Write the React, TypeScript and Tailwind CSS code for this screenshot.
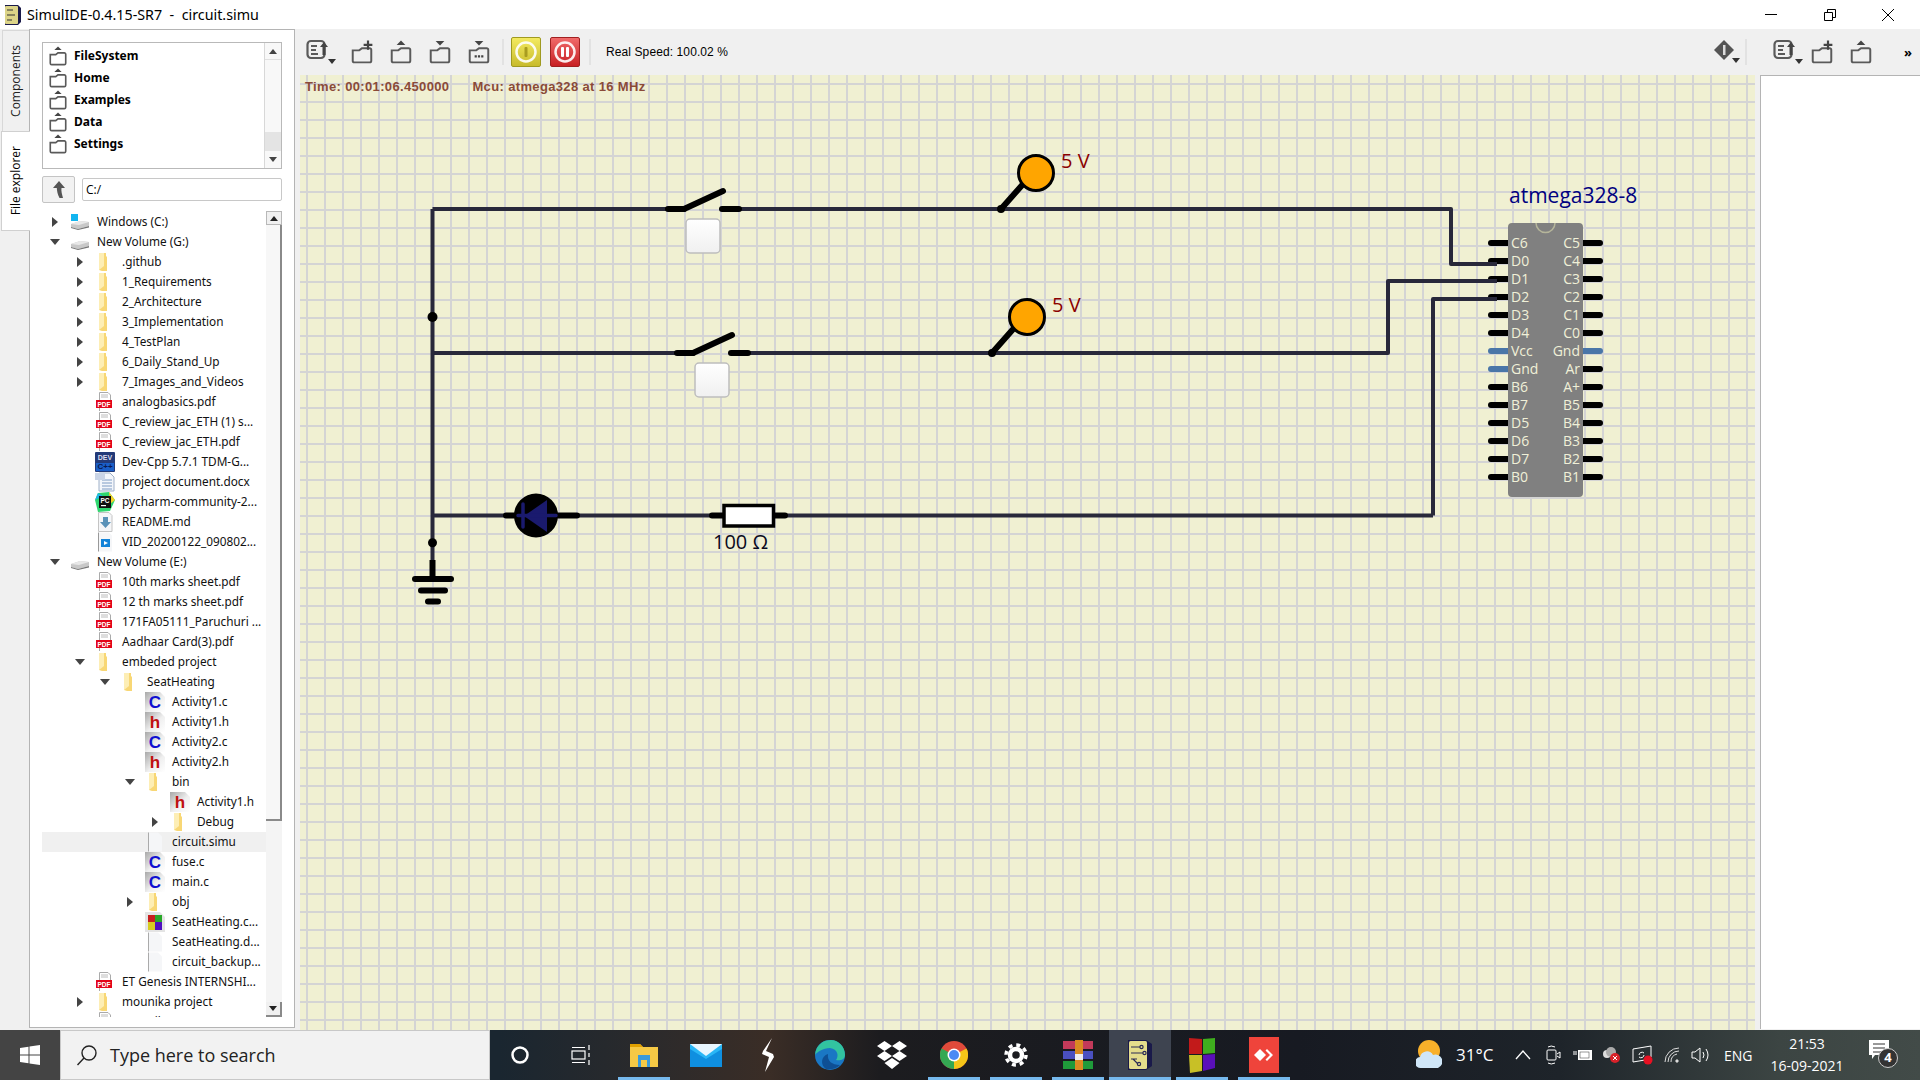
import React from 'react';

type Kind = 'win' | 'drive' | 'folder' | 'pdf' | 'dev' | 'docx' | 'py' | 'md' | 'vid' | 'c' | 'h' | 'blank' | 'rar';
type Arrow = 'right' | 'down' | null;

interface TreeRow {
  label: string;
  level: number;
  kind: Kind;
  arrow?: Arrow;
  selected?: boolean;
}

const treeRows: TreeRow[] = [
  { label: 'Windows (C:)', level: 0, kind: 'win', arrow: 'right' },
  { label: 'New Volume (G:)', level: 0, kind: 'drive', arrow: 'down' },
  { label: '.github', level: 1, kind: 'folder', arrow: 'right' },
  { label: '1_Requirements', level: 1, kind: 'folder', arrow: 'right' },
  { label: '2_Architecture', level: 1, kind: 'folder', arrow: 'right' },
  { label: '3_Implementation', level: 1, kind: 'folder', arrow: 'right' },
  { label: '4_TestPlan', level: 1, kind: 'folder', arrow: 'right' },
  { label: '6_Daily_Stand_Up', level: 1, kind: 'folder', arrow: 'right' },
  { label: '7_Images_and_Videos', level: 1, kind: 'folder', arrow: 'right' },
  { label: 'analogbasics.pdf', level: 1, kind: 'pdf' },
  { label: 'C_review_jac_ETH (1) s...', level: 1, kind: 'pdf' },
  { label: 'C_review_jac_ETH.pdf', level: 1, kind: 'pdf' },
  { label: 'Dev-Cpp 5.7.1 TDM-G...', level: 1, kind: 'dev' },
  { label: 'project document.docx', level: 1, kind: 'docx' },
  { label: 'pycharm-community-2...', level: 1, kind: 'py' },
  { label: 'README.md', level: 1, kind: 'md' },
  { label: 'VID_20200122_090802...', level: 1, kind: 'vid' },
  { label: 'New Volume (E:)', level: 0, kind: 'drive', arrow: 'down' },
  { label: '10th marks sheet.pdf', level: 1, kind: 'pdf' },
  { label: '12 th marks sheet.pdf', level: 1, kind: 'pdf' },
  { label: '171FA05111_Paruchuri ...', level: 1, kind: 'pdf' },
  { label: 'Aadhaar Card(3).pdf', level: 1, kind: 'pdf' },
  { label: 'embeded project', level: 1, kind: 'folder', arrow: 'down' },
  { label: 'SeatHeating', level: 2, kind: 'folder', arrow: 'down' },
  { label: 'Activity1.c', level: 3, kind: 'c' },
  { label: 'Activity1.h', level: 3, kind: 'h' },
  { label: 'Activity2.c', level: 3, kind: 'c' },
  { label: 'Activity2.h', level: 3, kind: 'h' },
  { label: 'bin', level: 3, kind: 'folder', arrow: 'down' },
  { label: 'Activity1.h', level: 4, kind: 'h' },
  { label: 'Debug', level: 4, kind: 'folder', arrow: 'right' },
  { label: 'circuit.simu', level: 3, kind: 'blank', selected: true },
  { label: 'fuse.c', level: 3, kind: 'c' },
  { label: 'main.c', level: 3, kind: 'c' },
  { label: 'obj', level: 3, kind: 'folder', arrow: 'right' },
  { label: 'SeatHeating.c...', level: 3, kind: 'rar' },
  { label: 'SeatHeating.d...', level: 3, kind: 'blank' },
  { label: 'circuit_backup...', level: 3, kind: 'blank' },
  { label: 'ET Genesis INTERNSHI...', level: 1, kind: 'pdf' },
  { label: 'mounika project', level: 1, kind: 'folder', arrow: 'right' },
  { label: 'mounika report', level: 1, kind: 'pdf' },
];

const indentClass = ['pl-0', 'pl-[25px]', 'pl-[50px]', 'pl-[75px]', 'pl-[100px]'];

const TreeArrow: React.FC<{ dir?: Arrow }> = ({ dir }) => (
  <span className="w-[26px] shrink-0 flex justify-center">
    {dir === 'right' && (
      <svg width="6" height="10"><path d="M0 0 L6 5 L0 10 Z" fill="#444" /></svg>
    )}
    {dir === 'down' && (
      <svg width="10" height="6"><path d="M0 0 L10 0 L5 6 Z" fill="#444" /></svg>
    )}
  </span>
);

const FileIcon: React.FC<{ kind: Kind }> = ({ kind }) => {
  if (kind === 'folder') {
    return (
      <svg width="20" height="20">
        <path d="M4 1 h7 v3 l1 1 v14 H7 l-3 -1 Z" fill="#f8d775" />
        <path d="M4 1 h5 v13 l-5 4 Z" fill="#fdeeb5" />
      </svg>
    );
  }
  if (kind === 'drive' || kind === 'win') {
    return (
      <svg width="20" height="20">
        <path d="M1 12 L10 9 L19 10 L19 14 L8 17 L1 15 Z" fill="#c8c8c8" />
        <path d="M1 12 L10 9 L19 10 L9 13 Z" fill="#e8e8e8" />
        <path d="M1 15 L8 17 L19 14 L19 15.5 L8 18 L1 16 Z" fill="#777" />
        {kind === 'win' && <rect x="1" y="2" width="7" height="7" fill="#12b5f0" />}
      </svg>
    );
  }
  if (kind === 'pdf') {
    return (
      <svg width="20" height="20">
        <path d="M4.5 0.5 H13 L15.5 3 V8 M4.5 0.5 V19" stroke="#aaa" fill="none" />
        <path d="M6 3 H13 M6 5 H13" stroke="#bbb" />
        <rect x="1" y="8" width="16" height="8" fill="#e3051a" />
        <text x="9" y="14.5" textAnchor="middle" fontSize="6.5" fontWeight="700" fill="#fff" fontFamily="Liberation Sans, sans-serif">PDF</text>
      </svg>
    );
  }
  if (kind === 'c' || kind === 'h') {
    return (
      <svg width="20" height="20">
        <defs>
          <linearGradient id="srcBg" x1="0" y1="0" x2="1" y2="1">
            <stop offset="0" stopColor="#a8a8a8" />
            <stop offset="0.55" stopColor="#efefef" />
            <stop offset="1" stopColor="#fff" />
          </linearGradient>
        </defs>
        <path d="M0 0 H15 L20 5 V20 H0 Z" fill="url(#srcBg)" />
        <text x="10" y="16" textAnchor="middle" fontSize="17" fontWeight="700" fill={kind === 'c' ? '#1010d0' : '#c01010'} fontFamily="Liberation Sans, sans-serif">{kind === 'c' ? 'C' : 'h'}</text>
      </svg>
    );
  }
  if (kind === 'blank') {
    return (
      <svg width="20" height="20">
        <path d="M3.5 0.5 H13 L17 4.5 V19.5 H3.5 Z" fill="#f5f6f8" />
        <path d="M3.5 0.5 V19.5" stroke="#aaa" fill="none" />
      </svg>
    );
  }
  if (kind === 'rar') {
    return (
      <svg width="20" height="20">
        <path d="M0 0 H15 L20 5 V20 H0 Z" fill="#e4e4e4" />
        <rect x="3" y="3" width="7" height="7" fill="#c81e1e" />
        <rect x="10" y="3" width="7" height="7" fill="#28a828" />
        <rect x="3" y="10" width="7" height="8" fill="#d8cc20" />
        <rect x="10" y="10" width="7" height="8" fill="#5010c0" />
      </svg>
    );
  }
  if (kind === 'dev') {
    return (
      <svg width="20" height="20">
        <rect x="0" y="0" width="20" height="20" rx="1" fill="#233a78" />
        <rect x="1" y="11" width="18" height="8" fill="#1a5fc8" />
        <text x="10" y="8" textAnchor="middle" fontSize="7" fontWeight="700" fill="#dde" fontFamily="Liberation Sans, sans-serif">DEV</text>
        <text x="10" y="17" textAnchor="middle" fontSize="8" fontWeight="700" fill="#0a1a50" fontFamily="Liberation Sans, sans-serif">C++</text>
      </svg>
    );
  }
  if (kind === 'docx') {
    return (
      <svg width="20" height="20">
        <path d="M4 1 H15 L19 5 V19 H4 Z" fill="#f3f6fb" stroke="#9fb0c8" />
        <path d="M7 8 H17 M7 11 H17 M7 14 H17 M7 17 H17" stroke="#7f9cc4" />
        <rect x="0" y="1" width="10" height="7" fill="#c9d4e6" />
      </svg>
    );
  }
  if (kind === 'py') {
    return (
      <svg width="20" height="20">
        <path d="M3 1 L14 0 L20 8 L15 19 L3 20 L0 8 Z" fill="#2fd66e" />
        <path d="M14 0 L20 8 L15 12 Z" fill="#f5d327" />
        <path d="M0 8 L3 1 L8 4 Z" fill="#22b8e8" />
        <rect x="4" y="4" width="12" height="12" fill="#111" />
        <text x="10" y="11" textAnchor="middle" fontSize="6.5" fontWeight="700" fill="#fff" fontFamily="Liberation Sans, sans-serif">PC</text>
        <rect x="6" y="13" width="5" height="1.2" fill="#fff" />
      </svg>
    );
  }
  if (kind === 'md') {
    return (
      <svg width="20" height="20">
        <path d="M3.5 0.5 H14 L17 3.5 V19.5 H3.5 Z" fill="#f5f6f8" stroke="#c4c4c4" />
        <path d="M8 5 H13 V10 H16 L10.5 16 L5 10 H8 Z" fill="#5a92b8" />
      </svg>
    );
  }
  return (
    <svg width="20" height="20">
      <path d="M3.5 0.5 H14 L17 3.5 V19.5 H3.5 Z" fill="#f5f6f8" />
      <path d="M3.5 0.5 V19.5" stroke="#999" />
      <rect x="6" y="7" width="9" height="8" fill="#1383d8" />
      <path d="M9 9 L13 11 L9 13 Z" fill="#fff" />
    </svg>
  );
};

const FolderUp: React.FC<{ mark?: 'up' | 'down' | 'dots' | 'plus' | 'none'; size?: number }> = ({ mark = 'up', size = 22 }) => (
  <svg width={size} height={size} viewBox="0 0 22 22" fill="none">
    <path d="M2.5 9.5 V19 a1.5 1.5 0 0 0 1.5 1.5 H18 a1.5 1.5 0 0 0 1.5 -1.5 V9 a1.5 1.5 0 0 0 -1.5 -1.5 H11 L8.5 9.5 Z" stroke="#5a5a5a" strokeWidth="1.8" />
    {mark === 'up' && <path d="M7 4.5 L11 0.5 L15 4.5 Z" fill="#444" />}
    {mark === 'down' && <path d="M7 1 L15 1 L11 5 Z" fill="#444" />}
    {mark === 'dots' && (
      <g>
        <path d="M7 1 L15 1 L11 5 Z" fill="#444" />
        <path d="M7 15 H15" stroke="#444" strokeWidth="2" strokeDasharray="2 1" />
      </g>
    )}
    {mark === 'plus' && <path d="M16.5 0.5 V9 M12.5 4.5 H20.5" stroke="#444" strokeWidth="2" />}
  </svg>
);

const SaveIcon: React.FC = () => (
  <span className="relative w-[30px] h-[30px] flex items-start">
    <svg width="26" height="24" viewBox="0 0 26 24" fill="none" className="mt-[2px]">
      <rect x="1.5" y="2" width="17" height="17" rx="3.5" stroke="#5a5a5a" strokeWidth="2.2" />
      <path d="M5 7 H11 M5 11 H10 M5 15 H12" stroke="#5a5a5a" strokeWidth="2" />
      <path d="M14 8 L18 3 L22 8 H19.5 V16 H16.5 V8 Z" fill="#444" />
    </svg>
    <svg width="8" height="5" className="absolute right-0 bottom-[3px]"><path d="M0 0 H8 L4 5 Z" fill="#333" /></svg>
  </span>
);

const PowerButton: React.FC<{ tone: 'yellow' | 'red' }> = ({ tone }) => (
  <span className={tone === 'yellow'
    ? 'w-[30px] h-[30px] rounded-[2px] flex items-center justify-center border border-[#a09a20] bg-[linear-gradient(#f3ea60,#c8bb2c)]'
    : 'w-[30px] h-[30px] rounded-[2px] flex items-center justify-center border border-[#a02020] bg-[linear-gradient(#f06a6a,#c82024)]'}>
    <svg width="24" height="24" viewBox="0 0 24 24" fill="none">
      <circle cx="12" cy="12" r="9.5" stroke="#fff" strokeWidth="2.5" opacity="0.9" />
      {tone === 'yellow' ? (
        <rect x="10.5" y="7" width="3" height="10" rx="1" fill="#a89c20" />
      ) : (
        <g fill="#fff">
          <rect x="8" y="7" width="3" height="10" rx="1" />
          <rect x="13" y="7" width="3" height="10" rx="1" />
        </g>
      )}
    </svg>
  </span>
);

const Separator: React.FC = () => <span className="block w-[2px] h-[26px] bg-[#e2e2e2]" />;

const leftPins = ['C6', 'D0', 'D1', 'D2', 'D3', 'D4', 'Vcc', 'Gnd', 'B6', 'B7', 'D5', 'D6', 'D7', 'B0'];
const rightPins = ['C5', 'C4', 'C3', 'C2', 'C1', 'C0', 'Gnd', 'Ar', 'A+', 'B5', 'B4', 'B3', 'B2', 'B1'];

const pinY = (i: number) => 243 + i * 18;

const Wire: React.FC<{ d: string }> = ({ d }) => (
  <path d={d} stroke="#28283a" strokeWidth="4" fill="none" strokeLinejoin="round" />
);

const Pin: React.FC<{ x1: number; y1: number; x2: number; y2: number; color?: string; w?: number }> = ({ x1, y1, x2, y2, color = '#000', w = 6 }) => (
  <line x1={x1} y1={y1} x2={x2} y2={y2} stroke={color} strokeWidth={w} strokeLinecap="round" />
);

const Switch: React.FC<{ x: number; y: number }> = ({ x, y }) => (
  <g>
    <Pin x1={x} y1={y} x2={x + 16} y2={y} />
    <Pin x1={x + 16} y1={y} x2={x + 55} y2={y - 18} />
    <Pin x1={x + 54} y1={y} x2={x + 71} y2={y} />
    <rect x={x + 18} y={y + 10} width={34} height={34} rx={4} fill="url(#btnGrad)" stroke="#bdbdbd" strokeWidth="1.5" />
  </g>
);

const Probe: React.FC<{ cx: number; cy: number }> = ({ cx, cy }) => (
  <g>
    <Pin x1={cx - 35} y1={cy + 36} x2={cx - 12} y2={cy + 10} />
    <circle cx={cx - 35} cy={cy + 36} r={4} fill="#000" />
    <circle cx={cx} cy={cy} r={17.5} fill="#ffa500" stroke="#000" strokeWidth="3" />
    <text x={cx + 25} y={cy - 5} fontSize="20" fill="#8b0000" fontFamily="'Open Sans', sans-serif">5 V</text>
  </g>
);

const Circuit: React.FC = () => (
  <svg width="1455" height="955" className="absolute left-0 top-0" fontFamily="'Open Sans', sans-serif">
    <defs>
      <linearGradient id="btnGrad" x1="0" y1="0" x2="0" y2="1">
        <stop offset="0" stopColor="#fff" />
        <stop offset="1" stopColor="#f0f0f0" />
      </linearGradient>
    </defs>
    <g transform="translate(-300 -75)">
      <Wire d="M432.5 209 V560" />
      <Wire d="M432.5 209 H670" />
      <Wire d="M735 209 H1451 V264 H1497" />
      <Wire d="M432.5 353 H680" />
      <Wire d="M745 353 H1388 V281 H1497" />
      <Wire d="M1433 515.5 V299 H1497" />
      <Wire d="M432.5 515.5 H1433" />

      <Switch x={668} y={209} />
      <Switch x={677} y={353} />
      <Probe cx={1036} cy={173} />
      <Probe cx={1027} cy={317} />

      <circle cx="432.5" cy="317" r="5" fill="#000" />
      <circle cx="432.5" cy="542.7" r="4.5" fill="#000" />

      <Pin x1={506} y1={515.5} x2={515} y2={515.5} />
      <Pin x1={556} y1={515.5} x2={577} y2={515.5} />
      <circle cx="536" cy="515.5" r="22" fill="#000" />
      <path d="M547 500 V532 L524 516 Z" fill="#1a1a6e" />
      <path d="M523 504 V527 M518 515.5 H556" stroke="#1a1a6e" strokeWidth="3.5" strokeLinecap="round" />

      <Pin x1={712} y1={515.5} x2={724} y2={515.5} />
      <Pin x1={774} y1={515.5} x2={785} y2={515.5} />
      <rect x="724" y="505.5" width="49.5" height="20.5" fill="#fff" stroke="#000" strokeWidth="3.5" />
      <text x="713" y="549" fontSize="20" fill="#0a0a20">100 Ω</text>

      <line x1="432.5" y1="560" x2="432.5" y2="579" stroke="#000" strokeWidth="6" />
      <Pin x1={415} y1={579} x2={451} y2={579} />
      <Pin x1={421} y1={590.5} x2={445} y2={590.5} />
      <Pin x1={428} y1={601.5} x2={438} y2={601.5} />

      <text x="1509" y="203" fontSize="21" fill="#000080">atmega328-8</text>

      {leftPins.map((name, i) => (
        <g key={`l${i}`}>
          <Pin x1={1491} y1={pinY(i)} x2={1508} y2={pinY(i)} color={name === 'Vcc' || name === 'Gnd' ? '#4a76a8' : '#000'} />
        </g>
      ))}
      {rightPins.map((name, i) => (
        <g key={`r${i}`}>
          <Pin x1={1583} y1={pinY(i)} x2={1600} y2={pinY(i)} color={name === 'Gnd' ? '#4a76a8' : '#000'} />
        </g>
      ))}
      <Wire d="M1480 264 H1497" />
      <Wire d="M1480 281 H1497" />
      <Wire d="M1480 299 H1497" />
      <rect x="1508" y="223" width="75" height="274" rx="4" fill="#808080" />
      <path d="M1536 223 a9.5 9.5 0 0 0 19 0" fill="none" stroke="#b5b59a" strokeWidth="1.5" />
      {leftPins.map((name, i) => (
        <text key={`lt${i}`} x="1511" y={pinY(i) + 5} fontSize="14" fill="#f0f0d8">{name}</text>
      ))}
      {rightPins.map((name, i) => (
        <text key={`rt${i}`} x="1580" y={pinY(i) + 5} fontSize="14" fill="#f0f0d8" textAnchor="end">{name}</text>
      ))}
    </g>
  </svg>
);

const TaskIcon: React.FC<{ active?: boolean; under?: boolean; children: React.ReactNode }> = ({ active, under, children }) => (
  <span className={active
    ? 'relative w-[62px] h-full shrink-0 flex items-center justify-center bg-[#3e4450]'
    : 'relative w-[62px] h-full shrink-0 flex items-center justify-center'}>
    {children}
    {under && <span className={active ? 'absolute bottom-0 inset-x-0 h-[3px] bg-[#76b9ed]' : 'absolute bottom-0 inset-x-[5px] h-[3px] bg-[#76b9ed]'} />}
  </span>
);

const Taskbar: React.FC = () => (
  <div className="h-[50px] shrink-0 flex items-stretch text-white bg-[linear-gradient(90deg,#1a2630_500px,#2a2a2c_640px,#3a2d26_770px,#1c1c1f_880px,#171a22_1300px,#1e242a_1560px,#3c4543_1780px,#424b48_1920px)]">
    <div className="w-[60px] flex items-center justify-center bg-[#444]">
      <svg width="20" height="20" viewBox="0 0 20 20" fill="#fff">
        <path d="M0 3 L8.5 1.8 V9.5 H0 Z M9.5 1.6 L20 0 V9.5 H9.5 Z M0 10.5 H8.5 V18.2 L0 17 Z M9.5 10.5 H20 V20 L9.5 18.4 Z" />
      </svg>
    </div>
    <div className="w-[430px] flex items-center gap-[12px] pl-[15px] bg-[#f2f2f2] border border-[#c8c8c8] text-[#222]">
      <svg width="22" height="22" viewBox="0 0 22 22" fill="none" stroke="#222" strokeWidth="1.4">
        <circle cx="13" cy="9" r="7" />
        <path d="M8 14 L1.5 21" />
      </svg>
      <span className="text-[18px] font-['Open_Sans',sans-serif]">Type here to search</span>
    </div>
    <div className="flex items-center">
      <span className="w-[60px] flex justify-center">
        <svg width="20" height="20" fill="none"><circle cx="10" cy="10" r="7.5" stroke="#fff" strokeWidth="2.5" /></svg>
      </span>
      <span className="w-[63px] flex justify-center pr-[2px]">
        <svg width="20" height="20" fill="none" stroke="#fff" strokeWidth="1.2">
          <rect x="1" y="6" width="13" height="8" />
          <path d="M1 2.5 H14 M1 17.5 H14 M18 0 V5 M18 8 V12 M18 15 V20" />
        </svg>
      </span>
    </div>
    <TaskIcon under>
      <svg width="30" height="26" viewBox="0 0 30 26">
        <path d="M1 2 H11 L14 5 H29 V25 H1 Z" fill="#f6c945" />
        <path d="M1 2 H11 L14 5 H1 Z" fill="#e0a000" />
        <path d="M9 13 H21 V25 H18 V18 H12 V25 H9 Z" fill="#3a9ad9" />
      </svg>
    </TaskIcon>
    <TaskIcon>
      <svg width="32" height="24" viewBox="0 0 32 24">
        <rect x="0" y="1" width="32" height="23" fill="#29b6f6" />
        <path d="M0 1 H32 L16 13 Z" fill="#e8f6ff" />
        <path d="M0 24 V6 L16 16 L32 6 V24 Z" fill="#0f8fe0" />
      </svg>
    </TaskIcon>
    <TaskIcon>
      <svg width="14" height="34" viewBox="0 0 14 34" fill="#fff">
        <path d="M11 0 L2 13 L1 16 L8 19 L4 34 L13 19 L12 16 L5 13 Z" />
      </svg>
    </TaskIcon>
    <TaskIcon>
      <svg width="32" height="32" viewBox="0 0 32 32">
        <circle cx="16" cy="16" r="15" fill="#1a77c4" />
        <path d="M1 16 C2 5 10 1 17 1 C25 1 31 8 31 16 C31 21 25 22 22 21 C25 17 24 10 16 9 C9 9 3 13 1 16 Z" fill="#32c3a0" />
        <path d="M12 30 C6 26 7 17 14 15 C13 22 18 26 26 26 C22 30 17 31 12 30 Z" fill="#0e4f94" />
      </svg>
    </TaskIcon>
    <TaskIcon>
      <svg width="30" height="28" viewBox="0 0 30 28" fill="#fff">
        <path d="M7.5 0 L15 5 L7.5 10 L0 5 Z M22.5 0 L30 5 L22.5 10 L15 5 Z M7.5 10 L15 15 L7.5 20 L0 15 Z M22.5 10 L30 15 L22.5 20 L15 15 Z M15 17 L22.5 22 L15 28 L7.5 22 Z" />
      </svg>
    </TaskIcon>
    <TaskIcon under>
      <svg width="28" height="28" viewBox="0 0 28 28">
        <circle cx="14" cy="14" r="14" fill="#e04a3a" />
        <path d="M14 14 L26.5 7.5 A14 14 0 0 1 14 28 Z" fill="#f5c518" />
        <path d="M14 14 L14 28 A14 14 0 0 1 1.5 7.5 Z" fill="#34a853" />
        <circle cx="14" cy="14" r="6.5" fill="#fff" />
        <circle cx="14" cy="14" r="5" fill="#4a8af4" />
      </svg>
    </TaskIcon>
    <TaskIcon under>
      <svg width="24" height="24" viewBox="0 0 24 24" fill="none" stroke="#fff">
        <circle cx="12" cy="12" r="6" strokeWidth="4.5" />
        <circle cx="12" cy="12" r="10" strokeWidth="3.5" strokeDasharray="4 3.85" />
      </svg>
    </TaskIcon>
    <TaskIcon under>
      <svg width="30" height="30" viewBox="0 0 30 30">
        <rect x="0" y="1" width="30" height="8" fill="#c23a5a" />
        <rect x="0" y="11" width="30" height="8" fill="#4a50c0" />
        <rect x="0" y="21" width="30" height="8" fill="#1f9a3a" />
        <rect x="12" y="0" width="8" height="30" fill="#d98a22" />
        <rect x="12" y="14" width="8" height="6" fill="#eee" />
      </svg>
    </TaskIcon>
    <TaskIcon active under>
      <svg width="28" height="34" viewBox="0 0 28 34">
        <path d="M2 2 H20 L26 6 V28 L20 32 H2 Z" fill="#1a1a4a" />
        <rect x="3" y="3" width="18" height="28" rx="1.5" fill="#e4dc8c" />
        <g stroke="#2a2a55" strokeWidth="1.2" fill="none">
          <path d="M5 9 H14 M5 15 H17 M7 21 L12 26 M5 21 H11" />
          <circle cx="15.5" cy="9" r="1.6" />
          <circle cx="18.5" cy="15" r="1.6" />
          <circle cx="13" cy="26" r="1.6" />
        </g>
      </svg>
    </TaskIcon>
    <TaskIcon under>
      <svg width="28" height="36" viewBox="0 0 28 36">
        <path d="M1 1 L14 2 V17 L1 17 Z" fill="#c21a1a" />
        <path d="M15 2 L27 1 V16 L15 17 Z" fill="#3fae1e" />
        <path d="M1 18 L14 18 V34 L2 36 Z" fill="#c8c026" />
        <path d="M15 18 L27 17 V31 L15 34 Z" fill="#5a10b8" />
      </svg>
    </TaskIcon>
    <TaskIcon under>
      <span className="w-[30px] h-[36px] bg-[#ef443b] flex items-center justify-center">
        <svg width="20" height="14" viewBox="0 0 20 14" fill="#fff">
          <path d="M6 1 L12 7 L6 13 L0 7 Z" />
          <path d="M13 1 L19 7 L13 13 L11.5 11.5 L16 7 L11.5 2.5 Z" />
        </svg>
      </span>
    </TaskIcon>
    <div className="flex items-center pl-[121px] font-['Open_Sans',sans-serif]">
      <svg width="26" height="30" viewBox="0 0 26 30" className="mr-[14px]">
        <circle cx="13" cy="11" r="11" fill="#f8b02a" />
        <path d="M5 28 a5.5 5.5 0 0 1 -1 -11 a7 7 0 0 1 13 -2 a6.5 6.5 0 0 1 5 13 Z" fill="#cfe6f8" />
      </svg>
      <span className="text-[17px] w-[59px]">31°C</span>
      <svg width="16" height="10" viewBox="0 0 16 10" fill="none" stroke="#fff" strokeWidth="1.3" className="mr-[15px]"><path d="M1 9 L8 1 L15 9" /></svg>
      <svg width="15" height="20" viewBox="0 0 15 20" fill="none" stroke="#fff" className="mr-[12px]">
        <rect x="1" y="5" width="9" height="10" rx="1" />
        <path d="M11 9 L14 7 V13 L11 11 M2 2 Q5 0 9 2 M2 18 Q5 20 9 18" />
      </svg>
      <svg width="20" height="14" viewBox="0 0 20 14" className="mr-[9px]">
        <rect x="5" y="2" width="14" height="10" fill="#fff" />
        <rect x="7" y="4" width="9" height="6" fill="#fff" stroke="#333" strokeWidth="0.5" />
        <path d="M0 6 H4 M1 3 V5 M3 3 V5" stroke="#fff" />
      </svg>
      <svg width="18" height="18" viewBox="0 0 18 18" className="mr-[12px]">
        <circle cx="5" cy="8" r="4" fill="#ddd" />
        <circle cx="9" cy="6" r="5" fill="#aaa" />
        <circle cx="13" cy="12" r="5" fill="#d8222a" />
        <path d="M11 10 L15 14 M15 10 L11 14" stroke="#fff" />
      </svg>
      <svg width="21" height="20" viewBox="0 0 21 20" fill="none" stroke="#fff" className="mr-[11px]">
        <path d="M1 4 L19 1 V12 M1 4 V17 L13 15" />
        <path d="M7 10 a3 3 0 0 1 5 -2 M12 10 a3 3 0 0 1 -5 2" />
        <circle cx="16" cy="15" r="4.5" fill="#e81123" stroke="none" />
      </svg>
      <svg width="16" height="16" viewBox="0 0 16 16" fill="none" stroke="#ddd" className="mr-[11px]">
        <path d="M1 15 A14 14 0 0 1 15 1 M4 15 A11 11 0 0 1 15 4 M7 15 A8 8 0 0 1 13 7" />
        <circle cx="13" cy="14" r="1.2" fill="#ddd" />
      </svg>
      <svg width="20" height="18" viewBox="0 0 20 18" fill="none" stroke="#fff" className="mr-[13px]">
        <path d="M1 6 H4 L9 2 V16 L4 12 H1 Z M12 6 Q14 9 12 12 M15 3 Q19 9 15 15" />
      </svg>
      <span className="text-[14px] w-[41px]">ENG</span>
      <span className="w-[84px] flex flex-col items-center text-[14px] leading-[22px]">
        <span>21:53</span>
        <span>16-09-2021</span>
      </span>
      <span className="relative w-[30px] h-[30px] ml-[20px]">
        <svg width="20" height="19" viewBox="0 0 20 19">
          <path d="M0 0 H20 V15 H6 L3 19 V15 H0 Z" fill="#fff" />
          <path d="M4 4 H16 M4 8 H16 M4 12 H12" stroke="#333" />
        </svg>
        <span className="absolute left-[9px] top-[8px] w-[20px] h-[20px] rounded-full border border-[#ccc] bg-[#333] flex items-center justify-center text-[13px] font-bold">4</span>
      </span>
    </div>
  </div>
);

const App: React.FC = () => (
  <div className="w-[1920px] h-[1080px] flex flex-col overflow-hidden bg-[#f0f0f0] font-['Noto_Sans',sans-serif] text-black">
    {/* title bar */}
    <div className="h-[29px] shrink-0 bg-white flex items-center relative">
      <svg width="20" height="22" viewBox="0 0 20 22" className="ml-[3px]">
        <path d="M2 1 H15 L18 4 V18 L15 21 H2 Z" fill="#1a1a4a" />
        <rect x="2" y="2" width="13" height="18" rx="1" fill="#dcd488" />
        <path d="M4 6 H10 M4 11 H12 M4 16 H9" stroke="#333" strokeWidth="1" />
      </svg>
      <span className="ml-[4px] text-[14.3px] whitespace-pre">SimulIDE-0.4.15-SR7  -  circuit.simu</span>
      <div className="ml-auto flex items-center h-full pr-[3px]">
        <span className="w-[58px] flex justify-center"><span className="w-[12px] h-[1.5px] bg-black" /></span>
        <span className="w-[59px] flex justify-center">
          <svg width="12" height="12" fill="none" stroke="#000"><path d="M0.5 3.5 H8.5 V11.5 H0.5 Z M3.5 3.5 V0.5 H11.5 V8.5 H8.5" /></svg>
        </span>
        <span className="w-[58px] flex justify-center">
          <svg width="12" height="12" fill="none" stroke="#000"><path d="M0 0 L12 12 M12 0 L0 12" /></svg>
        </span>
      </div>
    </div>

    <div className="flex-1 flex min-h-0">
      {/* vertical tabs */}
      <div className="w-[29px] shrink-0 pt-[1px] font-['Open_Sans',sans-serif] text-[12px]">
        <div className="ml-[2px] h-[101px] border-l border-t border-[#d8d8d8] flex items-center justify-center">
          <span className="[writing-mode:vertical-rl] rotate-180 text-[#222]">Components</span>
        </div>
        <div className="ml-[1px] mr-[-1px] h-[100px] bg-white border border-r-0 border-[#d0d0d0] flex items-center justify-center relative">
          <span className="[writing-mode:vertical-rl] rotate-180">File explorer</span>
        </div>
      </div>

      {/* file explorer panel */}
      <div className="w-[266px] shrink-0 bg-white border border-[#b4b4b4] mb-[2px] px-[12px] pt-[12px] flex flex-col min-h-0">
        <div className="h-[127px] shrink-0 border border-[#b9b9b9] flex">
          <div className="flex-1 pt-[2px]">
            {['FileSystem', 'Home', 'Examples', 'Data', 'Settings'].map((name) => (
              <div key={name} className="h-[22px] flex items-center">
                <span className="ml-[5px] w-[26px]"><FolderUp size={20} /></span>
                <span className="text-[12px] font-bold">{name}</span>
              </div>
            ))}
          </div>
          <div className="w-[17px] flex flex-col border-l border-[#d8d8d8] bg-[#f8f8f8]">
            <div className="h-[17px] flex items-center justify-center border-b border-[#e0e0e0]">
              <svg width="8" height="5"><path d="M0 5 L4 0 L8 5 Z" fill="#444" /></svg>
            </div>
            <div className="flex-1" />
            <div className="h-[19px] bg-[#e4e4e4]" />
            <div className="h-[17px] flex items-center justify-center">
              <svg width="8" height="5"><path d="M0 0 L8 0 L4 5 Z" fill="#444" /></svg>
            </div>
          </div>
        </div>

        <div className="h-[27px] shrink-0 mt-[7px] flex gap-[7px] items-center">
          <span className="w-[33px] h-[27px] border border-[#c4c4c4] rounded-[2px] bg-[#f2f2f2] flex items-center justify-center">
            <svg width="14" height="18" viewBox="0 0 14 18" fill="#555">
              <path d="M7 0 L13 7 H9.5 C9 10 10 13 11 17 H7.5 C5.5 13 5 10 4.8 7 H1 Z" />
            </svg>
          </span>
          <span className="flex-1 h-[23px] border border-[#c8c8c8] rounded-[2px] bg-white pl-[3px] text-[12px] leading-[21px] font-['Open_Sans',sans-serif]">C:/</span>
        </div>

        <div className="h-[806px] shrink-0 mt-[8px] flex overflow-hidden">
          <div className="w-[224px] shrink-0 overflow-hidden pt-[1px]">
            {treeRows.map((row, i) => (
              <div key={`${row.label}${i}`} className={row.selected ? 'h-[20px] flex items-center bg-[#f0f0f0]' : 'h-[20px] flex items-center'}>
                <span className={`flex items-center ${indentClass[row.level]}`}>
                  <TreeArrow dir={row.arrow} />
                  <span className="w-[20px] h-[20px] shrink-0 ml-[2px] flex"><FileIcon kind={row.kind} /></span>
                </span>
                <span className="ml-[7px] text-[11.8px] whitespace-nowrap text-[#111] font-['Noto_Sans',sans-serif]">{row.label}</span>
              </div>
            ))}
          </div>
          <div className="w-[16px] shrink-0 flex flex-col bg-[#f4f4f4]">
            <div className="h-[14px] flex items-center justify-center border border-[#b8b8b8] bg-[#f0f0f0]">
              <svg width="8" height="5"><path d="M0 5 L4 0 L8 5 Z" fill="#222" /></svg>
            </div>
            <div className="h-[596px] bg-[#f7f7f7] border-r-2 border-b-2 border-[#8a8a8a]" />
            <div className="flex-1" />
            <div className="h-[15px] flex items-center justify-center border-r-2 border-b-2 border-[#8a8a8a] bg-[#f0f0f0]">
              <svg width="8" height="5"><path d="M0 0 L8 0 L4 5 Z" fill="#222" /></svg>
            </div>
          </div>
        </div>
      </div>

      {/* main area */}
      <div className="flex-1 flex flex-col min-w-0 pl-[5px]">
        <div className="h-[46px] shrink-0 flex items-center pl-[6px]">
          <SaveIcon />
          <span className="ml-[14px]"><FolderUp mark="plus" size={24} /></span>
          <span className="ml-[15px]"><FolderUp mark="up" size={24} /></span>
          <span className="ml-[15px]"><FolderUp mark="down" size={24} /></span>
          <span className="ml-[15px]"><FolderUp mark="dots" size={24} /></span>
          <span className="ml-[11px]"><Separator /></span>
          <span className="ml-[7px]"><PowerButton tone="yellow" /></span>
          <span className="ml-[9px]"><PowerButton tone="red" /></span>
          <span className="ml-[9px]"><Separator /></span>
          <span className="ml-[15px] text-[12px] tracking-[0.1px] font-['Liberation_Sans',sans-serif]">Real Speed: 100.02 %</span>
          <div className="ml-auto flex items-center pr-[2px]">
            <span className="relative w-[26px] h-[26px] flex">
              <svg width="20" height="20" viewBox="0 0 20 20" className="mt-[1px]">
                <path d="M10 0 L20 10 L10 20 L0 10 Z" fill="#555" />
                <rect x="9" y="5" width="2.5" height="10" fill="#ddd" />
              </svg>
              <svg width="8" height="5" className="absolute right-0 bottom-[2px]"><path d="M0 0 H8 L4 5 Z" fill="#333" /></svg>
            </span>
            <span className="ml-[5px]"><Separator /></span>
            <span className="ml-[26px]"><SaveIcon /></span>
            <span className="ml-[7px]"><FolderUp mark="plus" size={24} /></span>
            <span className="ml-[15px]"><FolderUp mark="up" size={24} /></span>
            <span className="ml-[31px] w-[14px] text-[13px] font-bold leading-none">»</span>
          </div>
        </div>
        <div className="flex-1 flex min-h-0">
          <div className="relative w-[1455px] shrink-0 overflow-hidden bg-[#f0f0d2] bg-[linear-gradient(#d4d4d4_2px,transparent_2px),linear-gradient(90deg,#d4d4d4_2px,transparent_2px)] bg-[size:18px_18px] bg-[position:6px_8px]">
            <div className="absolute left-[5px] top-[2px] flex gap-[23px] text-[13px] font-bold tracking-[0.35px] text-[#8a4a38] font-['Liberation_Sans',sans-serif]">
              <span>Time: 00:01:06.450000</span>
              <span>Mcu: atmega328 at 16 MHz</span>
            </div>
            <Circuit />
          </div>
          <div className="flex-1 ml-[5px] mb-[1px] bg-white border-t border-l border-[#b4b4b4]" />
        </div>
      </div>
    </div>

    <Taskbar />
  </div>
);

export default App;
